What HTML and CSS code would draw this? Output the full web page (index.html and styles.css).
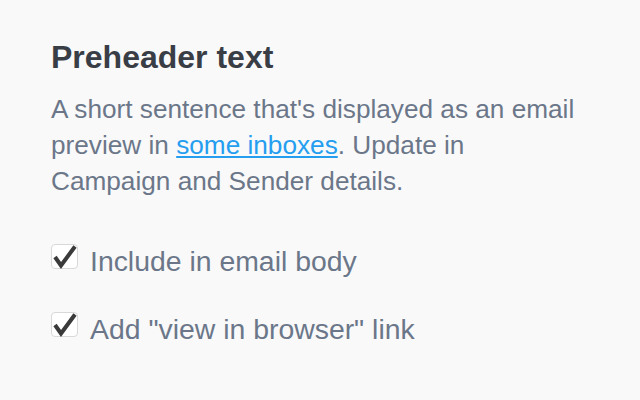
FILE: index.html
```html
<!DOCTYPE html>
<html lang="en">
<head>
    <meta charset="UTF-8">
    <meta name="viewport" content="width=device-width, initial-scale=1.0">
    <title>Preheader text</title>
    <link rel="stylesheet" href="styles.css">
</head>
<body>
    <div class="preheader">
        <h2 class="preheader-title">Preheader text</h2>
        <p class="preheader-desc">A short sentence that's displayed as an email preview in <a href="#" class="preheader-link">some inboxes</a>. Update in Campaign and Sender details.</p>

        <div class="options">
            <label class="option">
                <span class="check-box">
                    <svg class="check-mark" width="27" height="25" viewBox="0 0 27 25">
                        <path d="M4 13 L10 21.5 L24 2.5" />
                    </svg>
                </span>
                <span class="option-label">Include in email body</span>
            </label>
            <label class="option">
                <span class="check-box">
                    <svg class="check-mark" width="27" height="25" viewBox="0 0 27 25">
                        <path d="M4 13 L10 21.5 L24 2.5" />
                    </svg>
                </span>
                <span class="option-label">Add "view in browser" link</span>
            </label>
        </div>
    </div>
</body>
</html>
```

FILE: styles.css
```css
* {
    margin: 0;
    padding: 0;
    box-sizing: border-box;
}

body {
    font-family: "Liberation Sans", Arial, Helvetica, sans-serif;
    background: #f9f9fa;
    color: #6b7789;
}

.preheader {
    padding: 37px 51px;
}

.preheader-title {
    font-size: 32px;
    line-height: 40px;
    font-weight: bold;
    color: #393e46;
    margin-bottom: 14px;
}

.preheader-desc {
    max-width: 530px;
    font-size: 26.2px;
    line-height: 36px;
    color: #6b7789;
    margin-bottom: 44px;
}

.preheader-link {
    color: #259ef0;
    text-decoration: underline;
}

.options {
    display: flex;
    flex-direction: column;
    gap: 32px;
}

.option {
    display: flex;
    align-items: flex-start;
    gap: 12px;
}

.check-box {
    width: 27px;
    height: 25px;
    margin-top: 1px;
    background: #fff;
    border: 1px solid #d9d9d9;
    border-radius: 4px;
    flex-shrink: 0;
}

.check-mark {
    display: block;
    overflow: visible;
    margin: -1px 0 0 -1px;
}

.check-mark path {
    fill: none;
    stroke: #3a3a3a;
    stroke-width: 4;
    stroke-linejoin: miter;
}

.option-label {
    font-size: 28.4px;
    line-height: 36px;
    color: #6b7789;
}
```
